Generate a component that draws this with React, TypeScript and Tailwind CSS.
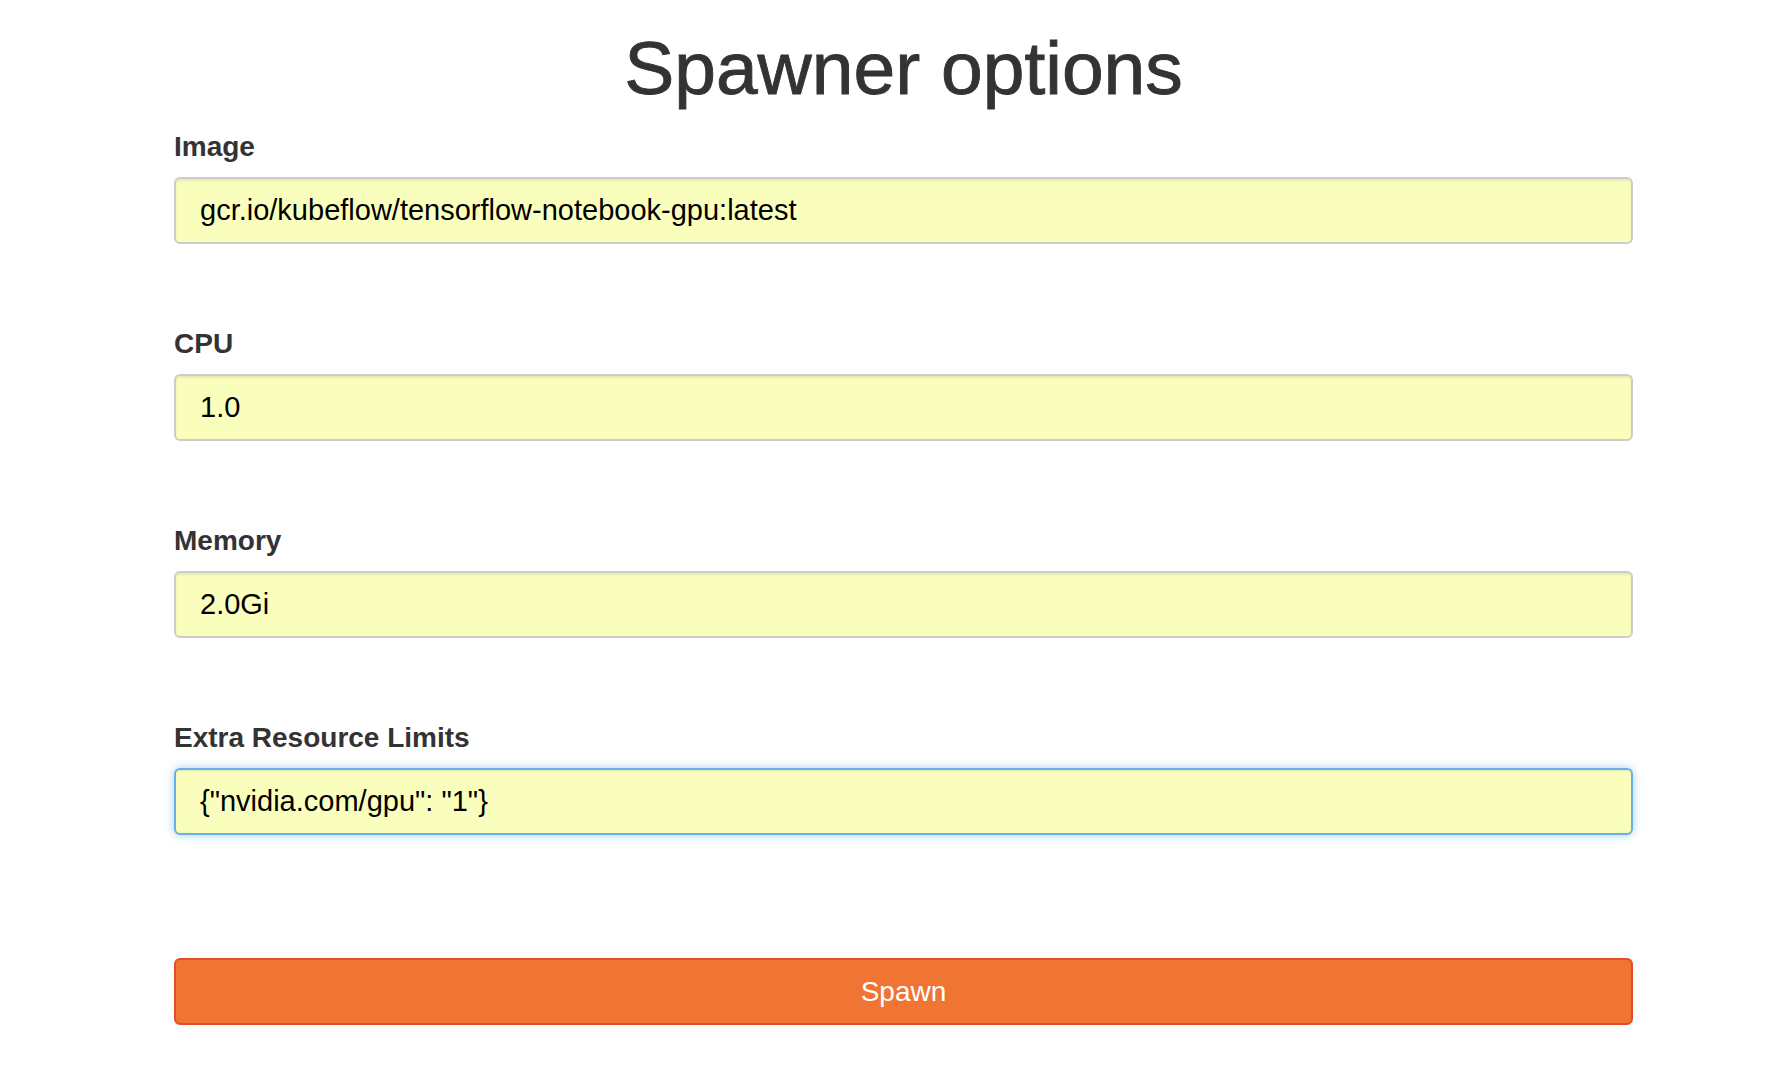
import React from 'react';

type Field = { label: string; value: string; focused?: boolean };

const fields: Field[] = [
  { label: 'Image', value: 'gcr.io/kubeflow/tensorflow-notebook-gpu:latest' },
  { label: 'CPU', value: '1.0' },
  { label: 'Memory', value: '2.0Gi' },
  { label: 'Extra Resource Limits', value: '{"nvidia.com/gpu": "1"}', focused: true },
];

export default function App() {
  return (
    <div className="min-h-[1080px] bg-white font-['Liberation_Sans',Arial,sans-serif] text-[#333]">
      <div className="ml-[174px] w-[1459px] pt-[27px] flex flex-col">
        <h1 className="text-center text-[75px] leading-[82px] font-normal [-webkit-text-stroke:0.9px_#333]">Spawner options</h1>
        <div className="mt-[19px] flex flex-col gap-[81px]">
          {fields.map((f) => (
            <div key={f.label}>
              <label className="block text-[28px] leading-[38px] font-bold mb-[11px]">{f.label}</label>
              <input
                readOnly
                value={f.value}
                className={
                  f.focused
                    ? 'block w-full h-[67px] px-[24px] rounded-[6px] border-2 border-[#66afe9] bg-[#fafebd] text-[29px] text-black outline-none shadow-[inset_0_1px_1px_rgba(0,0,0,0.075),0_0_10px_rgba(102,175,233,0.6)]'
                    : 'block w-full h-[67px] px-[24px] rounded-[6px] border-2 border-[#cccccc] bg-[#fafebd] text-[29px] text-black outline-none shadow-[inset_0_2px_2px_rgba(0,0,0,0.075)]'
                }
              />
            </div>
          ))}
        </div>
        <button className="mt-[123px] block w-full h-[67px] rounded-[6px] border-2 border-[#e24d2a] bg-[#f07432] text-white text-[28px]">
          Spawn
        </button>
      </div>
    </div>
  );
}
